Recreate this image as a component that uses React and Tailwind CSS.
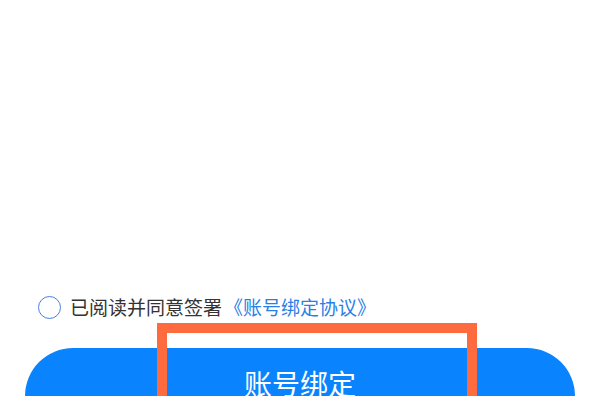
import React from "react";

export default function App() {
  const font = { fontFamily: '"Noto Sans CJK SC", "Noto Sans", sans-serif' };
  return (
    <div
      className="relative w-[600px] h-[396px] overflow-hidden bg-white flex flex-col justify-end"
      style={font}
    >
      <div className="flex items-center pl-[38px] mb-[29px]">
        <div className="w-[23px] h-[23px] rounded-full border-[1.5px] border-[#4a80d9] shrink-0" />
        <div className="ml-[9px] text-[19px] leading-none text-[#333333] whitespace-nowrap -mt-[3px]">
          已阅读并同意签署
          <span className="text-[#2a7fe6] ml-[2px]">《账号绑定协议》</span>
        </div>
      </div>
      <div className="mx-[25px] h-[96px] -mb-[48px] rounded-full bg-[#0a84fe] flex justify-center">
        <span className="pt-[21px] text-[28px] leading-none text-white">
          账号绑定
        </span>
      </div>
      <div className="absolute left-[157px] top-[323px] w-[320px] h-[120px] border-[10px] border-[#fe6b3e]" />
    </div>
  );
}
